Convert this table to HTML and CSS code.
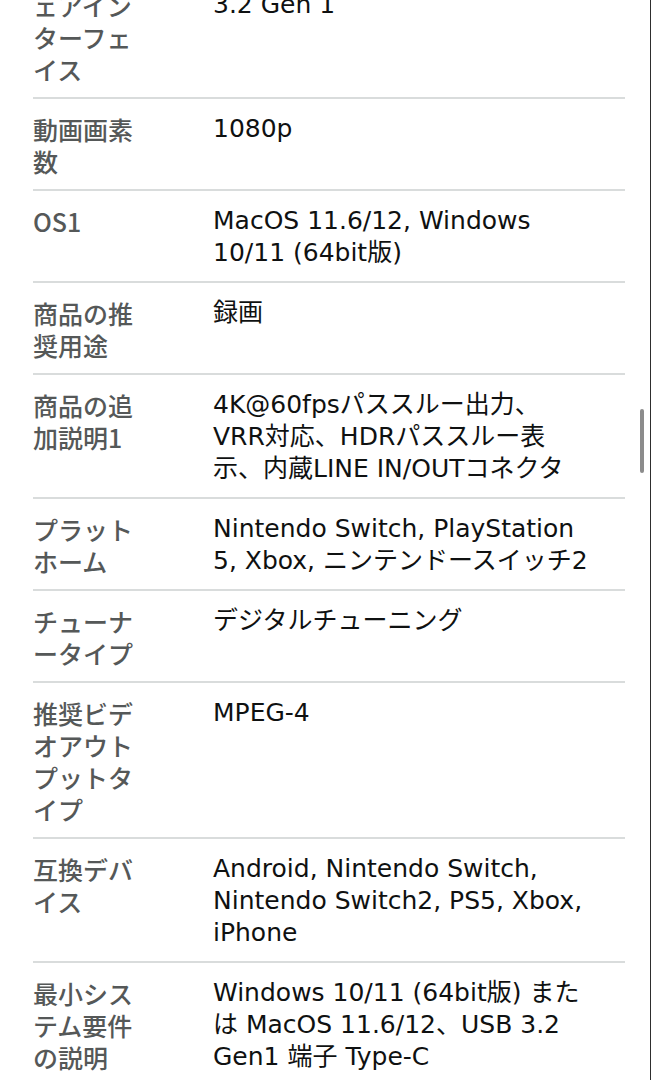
FILE: index.html
```html
<!DOCTYPE html>
<html lang="ja">
<head>
<meta charset="utf-8">
<title>商品の仕様</title>
<link rel="stylesheet" href="styles.css">
</head>
<body>
<div class="page">
  <div class="specs">
    <div class="row">
      <div class="label">ハードウェアインターフェイス</div>
      <div class="value">USB Type-C, USB<br>3.2 Gen 1</div>
    </div>
    <div class="row">
      <div class="label">動画画素数</div>
      <div class="value">1080p</div>
    </div>
    <div class="row">
      <div class="label">OS1</div>
      <div class="value">MacOS 11.6/12, Windows<br>10/11 (64bit版)</div>
    </div>
    <div class="row">
      <div class="label">商品の推奨用途</div>
      <div class="value">録画</div>
    </div>
    <div class="row">
      <div class="label">商品の追加説明1</div>
      <div class="value">4K@60fpsパススルー出力、<br>VRR対応、HDRパススルー表<br>示、内蔵LINE IN/OUTコネクタ</div>
    </div>
    <div class="row">
      <div class="label">プラットホーム</div>
      <div class="value">Nintendo Switch, PlayStation<br>5, Xbox, ニンテンドースイッチ2</div>
    </div>
    <div class="row">
      <div class="label">チューナータイプ</div>
      <div class="value">デジタルチューニング</div>
    </div>
    <div class="row">
      <div class="label">推奨ビデオアウトプットタイプ</div>
      <div class="value">MPEG-4</div>
    </div>
    <div class="row">
      <div class="label">互換デバイス</div>
      <div class="value">Android, Nintendo Switch,<br>Nintendo Switch2, PS5, Xbox,<br>iPhone</div>
    </div>
    <div class="row">
      <div class="label">最小システム要件の説明</div>
      <div class="value">Windows 10/11 (64bit版) また<br>は MacOS 11.6/12、USB 3.2<br>Gen1 端子 Type-C</div>
    </div>
  </div>
  <div class="scroll-thumb"></div>
</div>
</body>
</html>
```

FILE: styles.css
```css
html, body {
  margin: 0;
  padding: 0;
  background: #ffffff;
  overflow: hidden;
}

.page {
  position: relative;
  height: 1080px;
  overflow: hidden;
  border-right: 1px solid #2e2e2e;
  box-sizing: border-box;
  font-family: "DejaVu Sans", "Noto Sans CJK JP", sans-serif;
  font-size: 25px;
  line-height: 32px;
}

.specs {
  margin: -57px 25px 0 33px;
}

.row {
  display: grid;
  grid-template-columns: 180px 1fr;
  padding: 14px 0 12px;
  border-bottom: 2px solid #d9dcdc;
}

.label {
  max-width: 110px;
  color: #555858;
  font-family: "Noto Sans CJK JP", sans-serif;
  font-weight: 500;
  line-break: normal;
}

.value {
  color: #0f1111;
}

.scroll-thumb {
  position: absolute;
  right: 6px;
  top: 409px;
  width: 4px;
  height: 64px;
  border-radius: 2px;
  background: #8c8c8c;
}
```
